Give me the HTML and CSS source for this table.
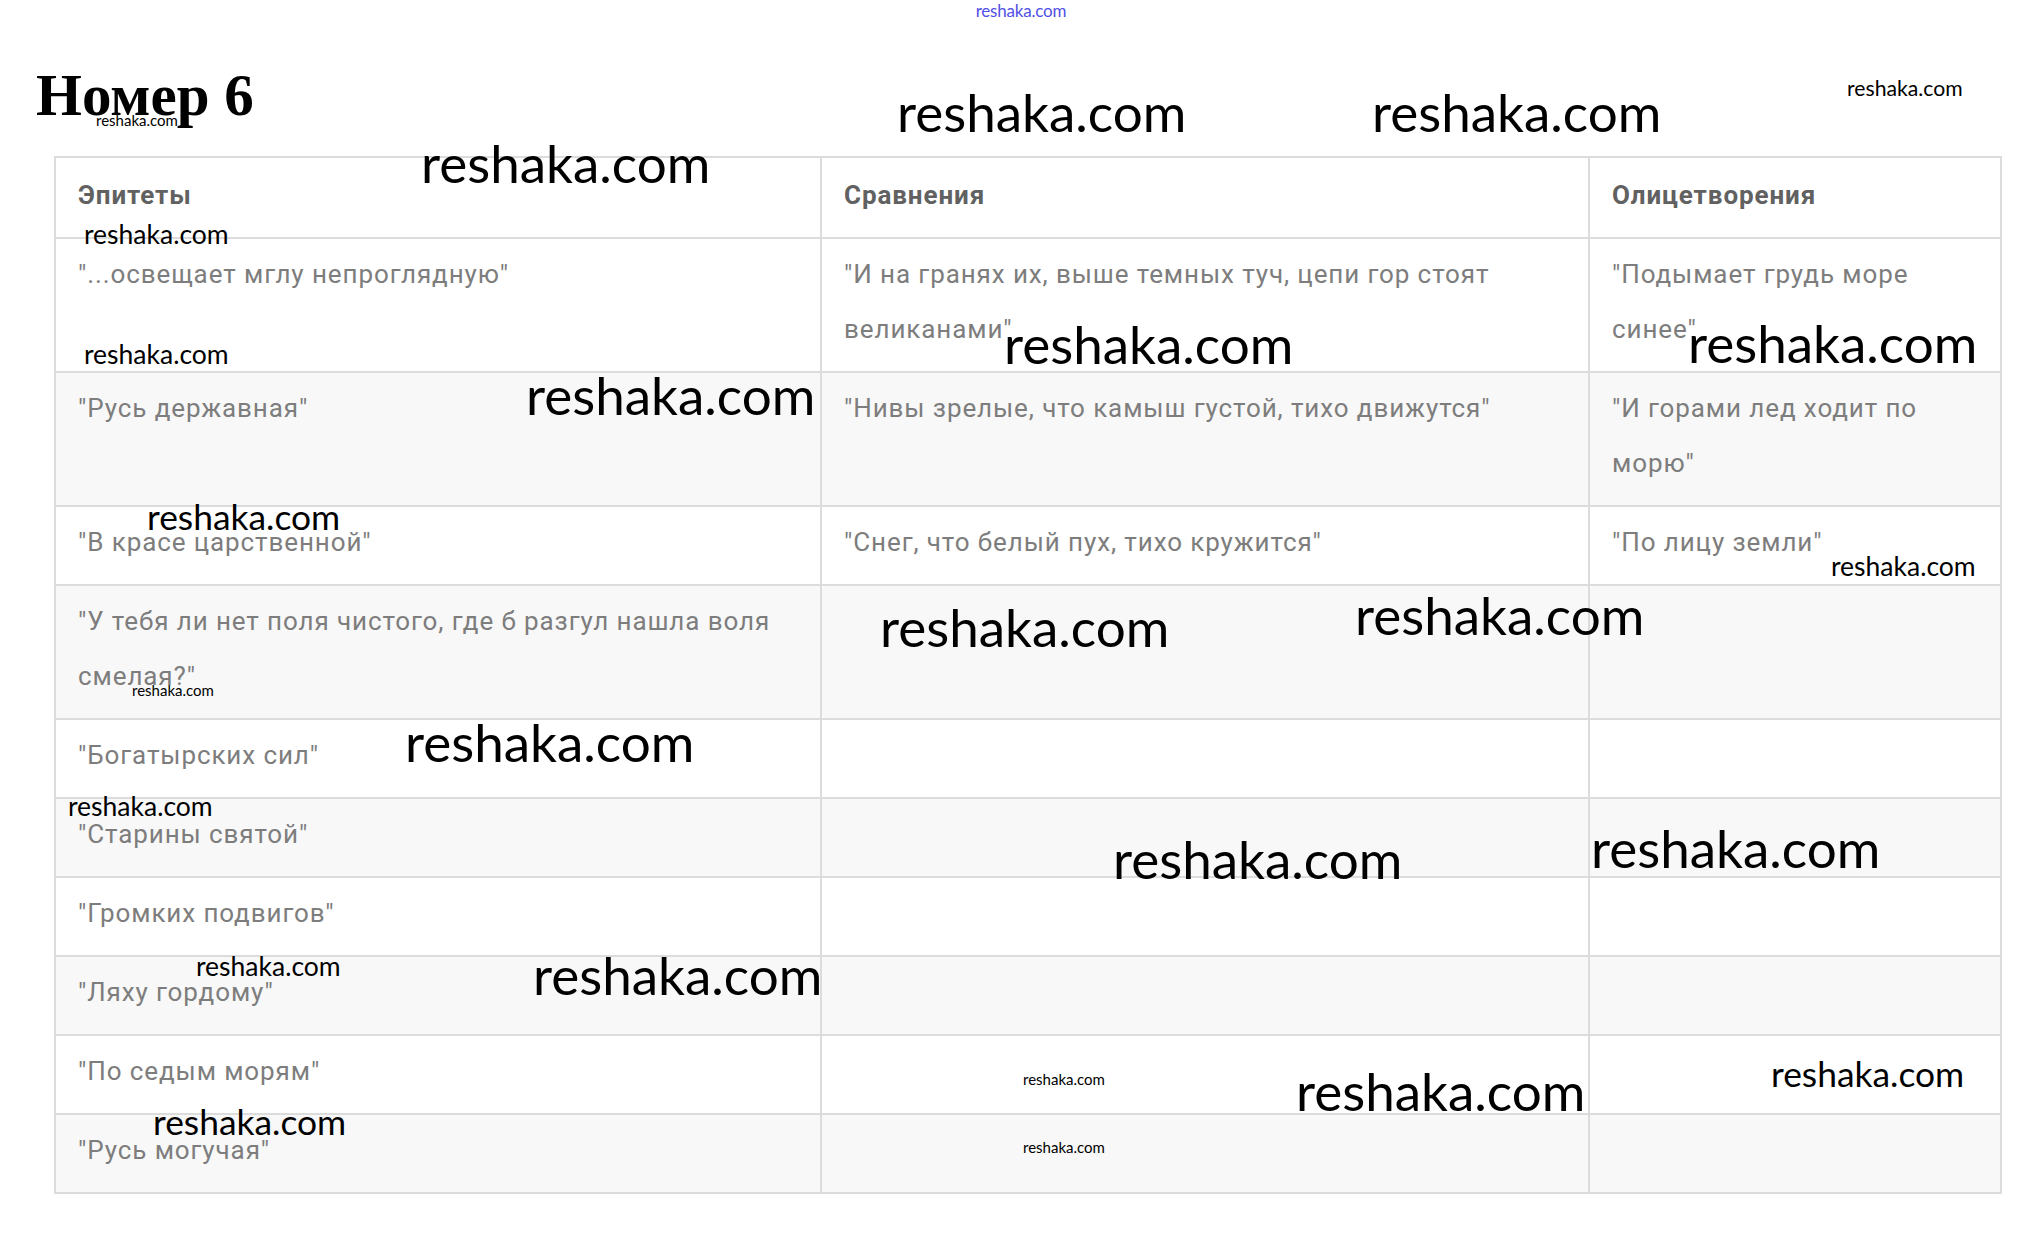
FILE: index.html
```html
<!DOCTYPE html>
<html lang="ru">
<head>
<meta charset="utf-8">
<title>Номер 6</title>
<link rel="stylesheet" href="styles.css">
</head>
<body>
<div class="page">
  <div class="topmark">reshaka.com</div>
  <h1 class="title">Номер 6</h1>
  <table class="grid">
    <colgroup>
      <col class="c1"><col class="c2"><col class="c3">
    </colgroup>
    <thead>
      <tr><th>Эпитеты</th><th>Сравнения</th><th>Олицетворения</th></tr>
    </thead>
    <tbody>
      <tr><td>"...освещает мглу непроглядную"</td><td>"И на гранях их, выше темных туч, цепи гор стоят великанами"</td><td>"Подымает грудь море синее"</td></tr>
      <tr><td>"Русь державная"</td><td>"Нивы зрелые, что камыш густой, тихо движутся"</td><td>"И горами лед ходит по морю"</td></tr>
      <tr><td>"В красе царственной"</td><td>"Снег, что белый пух, тихо кружится"</td><td>"По лицу земли"</td></tr>
      <tr><td>"У тебя ли нет поля чистого, где б разгул нашла воля смелая?"</td><td></td><td></td></tr>
      <tr><td>"Богатырских сил"</td><td></td><td></td></tr>
      <tr><td>"Старины святой"</td><td></td><td></td></tr>
      <tr><td>"Громких подвигов"</td><td></td><td></td></tr>
      <tr><td>"Ляху гордому"</td><td></td><td></td></tr>
      <tr><td>"По седым морям"</td><td></td><td></td></tr>
      <tr><td>"Русь могучая"</td><td></td><td></td></tr>
    </tbody>
  </table>

  <div class="wm-layer" aria-hidden="true">
    <span class="wm big w1">reshaka.com</span>
    <span class="wm big w2">reshaka.com</span>
    <span class="wm small w3">reshaka.com</span>
    <span class="wm big w4">reshaka.com</span>
    <span class="wm mid w5">reshaka.com</span>
    <span class="wm mid w6">reshaka.com</span>
    <span class="wm big w7">reshaka.com</span>
    <span class="wm big w8">reshaka.com</span>
    <span class="wm big w9">reshaka.com</span>
    <span class="wm large w10">reshaka.com</span>
    <span class="wm tiny w11">reshaka.com</span>
    <span class="wm big w12">reshaka.com</span>
    <span class="wm big w13">reshaka.com</span>
    <span class="wm mid w14">reshaka.com</span>
    <span class="wm big w15">reshaka.com</span>
    <span class="wm mid w16">reshaka.com</span>
    <span class="wm big w17">reshaka.com</span>
    <span class="wm big w18">reshaka.com</span>
    <span class="wm mid w19">reshaka.com</span>
    <span class="wm big w20">reshaka.com</span>
    <span class="wm tiny w21">reshaka.com</span>
    <span class="wm big w22">reshaka.com</span>
    <span class="wm large w23">reshaka.com</span>
    <span class="wm large w24">reshaka.com</span>
    <span class="wm tiny w25">reshaka.com</span>
    <span class="wm tiny w26">reshaka.com</span>
  </div>
</div>
</body>
</html>
```

FILE: styles.css
```css
html, body {
  margin: 0;
  padding: 0;
  background: #ffffff;
}

.page {
  position: relative;
  width: 2042px;
  min-height: 1241px;
}

.topmark {
  height: 22px;
  padding-top: 1px;
  text-align: center;
  font-family: Lato, "Liberation Sans", sans-serif;
  font-size: 17px;
  line-height: 20px;
  color: #5050e6;
  letter-spacing: -0.2px;
}

.title {
  margin: 43px 0 0 36px;
  font-family: "Liberation Serif", "Times New Roman", serif;
  font-weight: 700;
  font-size: 59px;
  line-height: 59px;
  color: #000;
}

.grid {
  margin: 31px 0 0 54px;
  width: 1946px;
  table-layout: fixed;
  border-collapse: collapse;
  font-family: Roboto, "Liberation Sans", sans-serif;
  font-size: 26px;
  letter-spacing: 0.9px;
  color: #7d7d7d;
}

.grid .c1 { width: 766px; }
.grid .c2 { width: 768px; }
.grid .c3 { width: 412px; }

.grid th,
.grid td {
  border: 2px solid #dcdcdc;
  padding: 8px 24px 14px 22px;
  line-height: 55px;
  text-align: left;
  vertical-align: top;
}

.grid th:nth-child(3),
.grid td:nth-child(3) {
  padding-right: 50px;
}

.grid th {
  padding-top: 10px;
  padding-bottom: 14px;
  font-weight: 700;
  color: #616161;
}

.grid tbody tr:nth-child(even) td {
  background: #f8f8f8;
}

/* watermark overlay */
.wm-layer {
  position: absolute;
  inset: 0;
  pointer-events: none;
}

.wm {
  position: absolute;
  font-family: Lato, "Liberation Sans", sans-serif;
  line-height: 1;
  color: #000;
  white-space: nowrap;
}

.wm.big   { font-size: 53px; }
.wm.large { font-size: 35.4px; }
.wm.mid   { font-size: 26.5px; }
.wm.small { font-size: 21.2px; }
.wm.tiny  { font-size: 15px; }

.w1  { left: 897px;  top: 85px; }
.w2  { left: 1372px; top: 85px; }
.w3  { left: 1847px; top: 78px; }
.w4  { left: 421px;  top: 136px; }
.w5  { left: 84px;   top: 221px; }
.w6  { left: 84px;   top: 341px; }
.w7  { left: 1004px; top: 317px; }
.w8  { left: 1688px; top: 316px; }
.w9  { left: 526px;  top: 368px; }
.w10 { left: 147px;  top: 499px; }
.w11 { left: 132px;  top: 683px; }
.w12 { left: 880px;  top: 600px; }
.w13 { left: 1355px; top: 588px; }
.w14 { left: 1831px; top: 553px; }
.w15 { left: 405px;  top: 715px; }
.w16 { left: 68px;   top: 793px; }
.w17 { left: 1113px; top: 832px; }
.w18 { left: 1591px; top: 821px; }
.w19 { left: 196px;  top: 953px; }
.w20 { left: 533px;  top: 948px; }
.w21 { left: 1023px; top: 1072px; }
.w22 { left: 1296px; top: 1064px; }
.w23 { left: 1771px; top: 1056px; }
.w24 { left: 153px;  top: 1104px; }
.w25 { left: 1023px; top: 1140px; }
.w26 { left: 96px;   top: 113px; }
```
